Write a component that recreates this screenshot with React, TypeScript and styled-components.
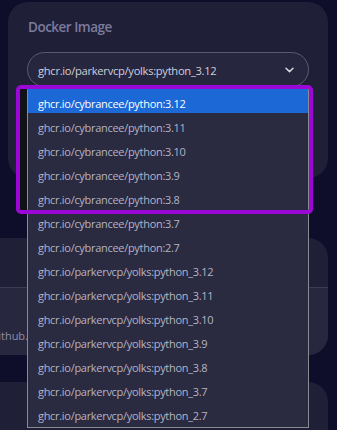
import React from "react";
import styled, { createGlobalStyle } from "styled-components";

const Global = createGlobalStyle`
  html, body { margin: 0; padding: 0; background: #0e0e2a; overflow: hidden; }
  body { font-family: "Open Sans", "Noto Sans", sans-serif; }
`;

const Page = styled.div`
  width: 337px;
  height: 430px;
  overflow: hidden;
  position: relative;
  display: flex;
  flex-direction: column;
  padding-top: 2px;
  box-sizing: border-box;
`;

const Card = styled.section<{ $offsetLeft: number; $height: number; $gap: number }>`
  flex: none;
  margin-left: ${(p) => p.$offsetLeft}px;
  margin-top: ${(p) => p.$gap}px;
  width: ${(p) => 328 - p.$offsetLeft}px;
  height: ${(p) => p.$height}px;
  background: #1f1f38;
  border-radius: 20px;
  box-sizing: border-box;
  display: flex;
  flex-direction: column;
  overflow: hidden;
`;

const ImageCard = styled(Card)`
  padding: 15px 20px 0 19px;
  overflow: visible;
  position: relative;
  z-index: 2;
`;

const Label = styled.div`
  font-size: 13.5px;
  font-weight: 600;
  letter-spacing: -0.5px;
  color: #7b7b9c;
  margin-left: 1px;
  line-height: 20px;
`;

const SelectWrap = styled.div`
  position: relative;
  margin-top: 15px;
  width: 282px;
`;

const SelectBox = styled.div`
  height: 35px;
  box-sizing: border-box;
  border: 1px solid #5a5a72;
  border-radius: 18px;
  background: #26263e;
  display: flex;
  align-items: center;
  justify-content: space-between;
  padding: 1px 14px 0 10px;
  color: #cfcfdc;
  font-size: 11.2px;
  letter-spacing: -0.3px;
`;

const Chevron = styled.svg`
  width: 9px;
  height: 6px;
`;

const List = styled.ul`
  position: absolute;
  left: 0;
  top: 36px;
  width: 282px;
  margin: 0;
  padding: 0 0 2px;
  list-style: none;
  background: #2a2a40;
  border: 1px solid #8a8a92;
  box-sizing: border-box;
`;

const Item = styled.li<{ $active?: boolean }>`
  height: 24px;
  display: flex;
  align-items: center;
  padding: 4px 0 0 10px;
  box-sizing: border-box;
  font-size: 11px;
  letter-spacing: -0.3px;
  white-space: nowrap;
  color: ${(p) => (p.$active ? "#ffffff" : "#b4b4c6")};
  background: ${(p) => (p.$active ? "#1b68d6" : "transparent")};
`;

const Highlight = styled.div`
  position: absolute;
  left: -11px;
  top: 33px;
  width: 297px;
  height: 129px;
  border: 4px solid #9a07d6;
  border-radius: 5px;
  box-sizing: border-box;
  box-shadow: inset 7px 0 0 #111118;
  pointer-events: none;
`;

const Body = styled.div`
  height: 49px;
`;

const Footer = styled.div`
  flex: 1;
  background: #27273f;
  border-top: 1px solid #3b3b53;
  display: flex;
  align-items: flex-start;
  padding: 40px 0 0 20px;
  font-size: 11px;
  line-height: 15px;
  color: #8d8da4;
  white-space: nowrap;
`;

const options = [
  "ghcr.io/cybrancee/python:3.12",
  "ghcr.io/cybrancee/python:3.11",
  "ghcr.io/cybrancee/python:3.10",
  "ghcr.io/cybrancee/python:3.9",
  "ghcr.io/cybrancee/python:3.8",
  "ghcr.io/cybrancee/python:3.7",
  "ghcr.io/cybrancee/python:2.7",
  "ghcr.io/parkervcp/yolks:python_3.12",
  "ghcr.io/parkervcp/yolks:python_3.11",
  "ghcr.io/parkervcp/yolks:python_3.10",
  "ghcr.io/parkervcp/yolks:python_3.9",
  "ghcr.io/parkervcp/yolks:python_3.8",
  "ghcr.io/parkervcp/yolks:python_3.7",
  "ghcr.io/parkervcp/yolks:python_2.7",
];

export default function App() {
  return (
    <>
      <Global />
      <Page>
        <ImageCard $offsetLeft={8} $height={176} $gap={0}>
          <Label>Docker Image</Label>
          <SelectWrap>
            <SelectBox>
              <span>ghcr.io/parkervcp/yolks:python_3.12</span>
              <Chevron viewBox="0 0 9 6">
                <path d="M1 1.2 L4.5 4.6 L8 1.2" fill="none" stroke="#d6d6e2" strokeWidth="1.5" strokeLinecap="round" strokeLinejoin="round" />
              </Chevron>
            </SelectBox>
            <List>
              {options.map((o, i) => (
                <Item key={o} $active={i === 0}>
                  {o}
                </Item>
              ))}
            </List>
            <Highlight />
          </SelectWrap>
        </ImageCard>
        <Card $offsetLeft={-197} $height={117} $gap={60}>
          <Body />
          <Footer>Startup images are fetched from github.</Footer>
        </Card>
        <Card $offsetLeft={-197} $height={120} $gap={27} />
      </Page>
    </>
  );
}
